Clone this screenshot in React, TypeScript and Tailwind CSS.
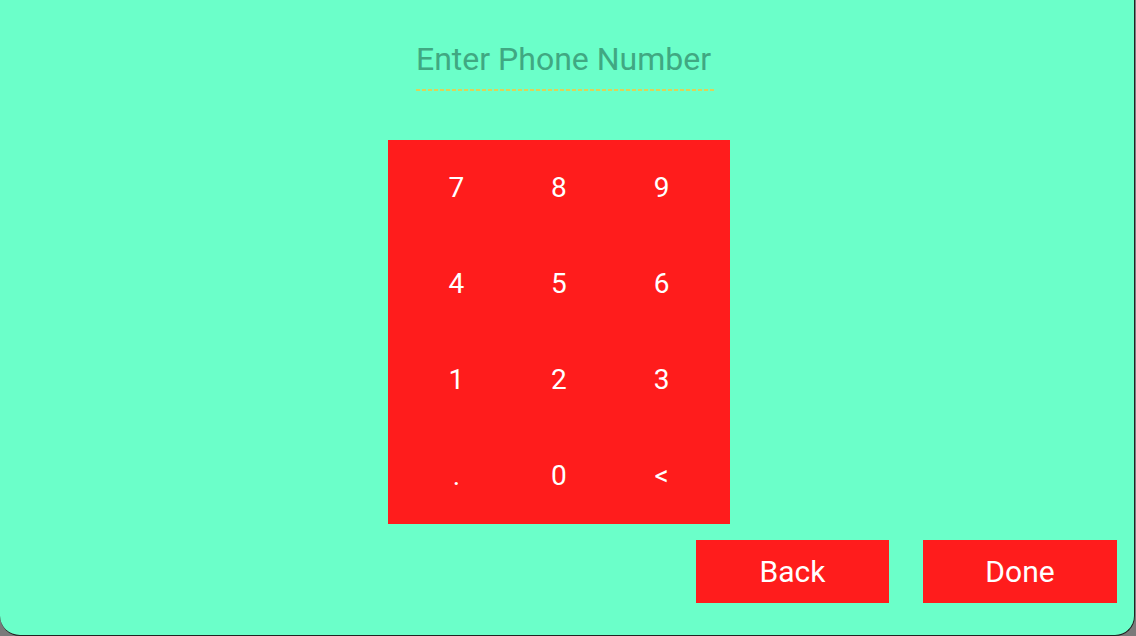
import React from "react";

const keys = ["7", "8", "9", "4", "5", "6", "1", "2", "3", ".", "0", "<"];

export default function App() {
  return (
    <div className="h-[636px] w-[1136px] bg-[#7a7a7a]" style={{ fontFamily: "Roboto, 'Noto Sans', sans-serif" }}>
      <div className="flex h-[636px] w-[1135px] flex-col rounded-b-[20px] border-r border-b border-[#222] bg-[#6bffc9]">
        <div className="flex flex-col pl-[388px] pt-[39px]">
          <div className="ml-[28px] flex h-[40px] w-[299px] items-center whitespace-nowrap text-[32px] text-[#40a882]">
            Enter Phone Number
          </div>
          <div className="ml-[28px] mt-[10px] h-[2px] w-[299px] bg-[repeating-linear-gradient(90deg,#dcd35a_0_4px,transparent_4px_6px)]" />
          <div className="mt-[49px] grid h-[384px] w-[342px] grid-cols-3 grid-rows-4 bg-[#ff1c1c] px-[17px]">
            {keys.map((k) => (
              <div key={k} className="flex items-center justify-center text-[28px] text-white">
                {k}
              </div>
            ))}
          </div>
        </div>
        <div className="mt-[16px] flex justify-end gap-[34px] pr-[17px]">
          <button className="flex h-[63px] w-[193px] items-center justify-center bg-[#ff1c1c] text-[30px] text-white">
            Back
          </button>
          <button className="flex h-[63px] w-[194px] items-center justify-center bg-[#ff1c1c] text-[30px] text-white">
            Done
          </button>
        </div>
      </div>
    </div>
  );
}
